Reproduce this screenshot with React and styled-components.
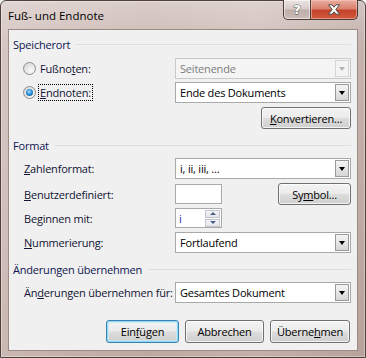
import React from 'react';
import styled, { createGlobalStyle, css } from 'styled-components';

const GlobalStyle = createGlobalStyle`
  html, body {
    margin: 0;
    padding: 0;
    background: #ffffff;
  }
  body {
    font-family: "Open Sans", "Noto Sans", sans-serif;
    font-size: 11px;
    letter-spacing: -0.2px;
    color: #111433;
  }
`;

// window frame + title bar
const Window = styled.div`
  width: 366px;
  height: 358px;
  box-sizing: border-box;
  display: flex;
  flex-direction: column;
  border: 1px solid #4f403c;
  border-radius: 6px 6px 0 0;
  background:
    linear-gradient(90deg, rgba(255,255,255,0.18) 0%, rgba(255,255,255,0) 40%, rgba(255,255,255,0.1) 70%, rgba(0,0,0,0.04) 100%),
    linear-gradient(180deg, #dacdc9 0%, #cdbab5 12%, #c6b1ab 60%, #bea8a2 100%);
  box-shadow: inset 0 0 0 1px rgba(255,255,255,0.35);
`;

const TitleBar = styled.div`
  height: 28px;
  display: flex;
  justify-content: space-between;
  align-items: flex-start;
`;

const Title = styled.span`
  padding-left: 7px;
  line-height: 29px;
  font-size: 11.5px;
  letter-spacing: 0;
  color: #000000;
`;

const CaptionButtons = styled.div`
  display: flex;
  margin-right: 7px;
  margin-top: -1px;
`;

const CaptionButton = styled.div`
  box-sizing: border-box;
  height: 20px;
  width: ${p => p.$width}px;
  display: flex;
  align-items: center;
  justify-content: center;
  border: 1px solid #4a3b37;
  border-top: none;
  ${p => p.$close ? css`
    border-radius: 0 0 5px 0;
    border-left: none;
    background: linear-gradient(180deg, #e9ad9f 0%, #d9836f 45%, #c5432b 55%, #d25a3e 100%);
    box-shadow: inset 0 0 0 1px rgba(255,210,200,0.5);
  ` : css`
    border-radius: 0 0 0 5px;
    background: linear-gradient(180deg, #ece4e2 0%, #d8ccc9 45%, #bfaea9 55%, #cbbcb8 100%);
    box-shadow: inset 0 0 0 1px rgba(255,255,255,0.55);
  `}
`;

const HelpGlyph = styled.span`
  font-family: "DejaVu Sans", sans-serif;
  font-weight: bold;
  font-size: 13px;
  line-height: 1;
  color: #ffffff;
  -webkit-text-stroke: 0.8px #4a4a4a;
  paint-order: stroke fill;
`;

// client area
const Client = styled.div`
  flex: 1;
  margin: 0 7px 6px 7px;
  box-sizing: border-box;
  border: 1px solid #9c8a85;
  background: #f0f0f0;
  display: flex;
  flex-direction: column;
`;

const GroupHeader = styled.div`
  display: flex;
  align-items: center;
  gap: 6px;
  height: 14px;
  margin-top: ${p => p.$top}px;
  padding-left: 4px;
  padding-right: 6px;
  color: #0f1550;

  &::after {
    content: '';
    flex: 1;
    height: 1px;
    background: #d5dfe5;
  }
`;

const Row = styled.div`
  display: flex;
  align-items: center;
  height: ${p => p.$height || 21}px;
  margin-top: ${p => p.$top}px;
  padding-left: 14px;
  padding-right: 6px;
  justify-content: ${p => p.$end ? 'flex-end' : 'flex-start'};
`;

const LabelCell = styled.div`
  width: 152px;
  flex: none;
  display: flex;
  align-items: center;
  gap: 3px;
  white-space: nowrap;
`;

const Label = styled.span`
  padding: 0 1px;
  ${p => p.$focus && css`
    outline: 1px dotted #000;
    outline-offset: 0;
  `}
`;

const Radio = styled.span`
  width: 13px;
  height: 13px;
  box-sizing: border-box;
  border-radius: 50%;
  border: 1px solid #8d8d8d;
  background: radial-gradient(circle at 65% 70%, #fbfbfb 0%, #e6e6e6 50%, #cfcfcf 100%);
  display: flex;
  align-items: center;
  justify-content: center;

  &::after {
    content: '';
    display: ${p => p.$checked ? 'block' : 'none'};
    width: 7px;
    height: 7px;
    border-radius: 50%;
    background: radial-gradient(circle at 45% 40%, #a9e2ff 0%, #2c8fd6 45%, #0c4678 100%);
  }
`;

const Combo = styled.div`
  box-sizing: border-box;
  width: 176px;
  height: 21px;
  display: flex;
  align-items: center;
  padding: 1px 1px 1px 4px;
  border: 1px solid ${p => p.$disabled ? '#c9c9c9' : '#a9a9a9'};
  background: ${p => p.$disabled ? '#f4f4f4' : '#ffffff'};
  color: ${p => p.$disabled ? '#7c7c7c' : '#000000'};
`;

const ComboText = styled.span`
  flex: 1;
  white-space: nowrap;
`;

const DropButton = styled.span`
  box-sizing: border-box;
  width: 14px;
  height: 17px;
  display: flex;
  align-items: center;
  justify-content: center;
  border: 1px solid ${p => p.$disabled ? '#d6d6d6' : '#9a9a9a'};
  background: ${p => p.$disabled
    ? '#f4f4f4'
    : 'linear-gradient(180deg, #f4f4f4 0%, #e6e6e6 50%, #d6d6d6 100%)'};
`;

const Arrow = styled.span`
  width: 0;
  height: 0;
  border-left: 3.5px solid transparent;
  border-right: 3.5px solid transparent;
  border-top: 4px solid ${p => p.$disabled ? '#b4b4b4' : '#000000'};
`;

const TextBox = styled.div`
  box-sizing: border-box;
  width: 47px;
  height: 20px;
  border: 1px solid #a9a9a9;
  background: #ffffff;
  display: flex;
  align-items: center;
  padding-left: 3px;
  color: #1a2bb0;
`;

const SpinText = styled.span`
  flex: 1;
`;

const SpinButtons = styled.div`
  display: flex;
  flex-direction: column;
  gap: 1px;
  margin-right: 1px;
`;

const SpinButton = styled.span`
  box-sizing: border-box;
  width: 15px;
  height: 8px;
  display: flex;
  align-items: center;
  justify-content: center;
  border: 1px solid #c1c6cf;
  background: linear-gradient(180deg, #f3f4f6 0%, #e3e5e9 100%);

  &::after {
    content: '';
    width: 0;
    height: 0;
    border-left: 3px solid transparent;
    border-right: 3px solid transparent;
    ${p => p.$up
      ? css`border-bottom: 3px solid #4a5f8c;`
      : css`border-top: 3px solid #4a5f8c;`}
  }
`;

const Button = styled.div`
  box-sizing: border-box;
  width: ${p => p.$width}px;
  height: ${p => p.$height || 22}px;
  display: flex;
  align-items: center;
  justify-content: center;
  color: #000000;
  border-radius: 3px;
  border: 1px solid ${p => p.$default ? '#3c7fb1' : '#707070'};
  background: linear-gradient(180deg, #f3f3f3 0%, #ebebeb 48%, #dddddd 52%, #cfcfcf 100%);
  box-shadow: ${p => p.$default
    ? 'inset 0 0 0 1px #8fdcf9, inset 0 0 0 2px rgba(190,235,252,0.6)'
    : 'inset 0 0 0 1px rgba(255,255,255,0.75)'};
`;

const Spacer = styled.div`
  flex: 1;
`;

const ButtonRow = styled.div`
  display: flex;
  justify-content: flex-end;
  gap: 6px;
  height: 23px;
  padding-right: 7px;
  margin-top: 17px;
`;

const CloseIcon = () => (
  <svg width="14" height="11" viewBox="0 0 14 11">
    <path
      d="M1.5 0.8 L5 0.8 L7 3.2 L9 0.8 L12.5 0.8 L8.8 5.5 L12.5 10.2 L9 10.2 L7 7.8 L5 10.2 L1.5 10.2 L5.2 5.5 Z"
      fill="#ffffff"
      stroke="#4b4b4b"
      strokeWidth="1"
      strokeLinejoin="round"
    />
  </svg>
);

const Combobox = ({ children, disabled }) => (
  <Combo $disabled={disabled}>
    <ComboText>{children}</ComboText>
    <DropButton $disabled={disabled}>
      <Arrow $disabled={disabled} />
    </DropButton>
  </Combo>
);

export default function App() {
  return (
    <>
      <GlobalStyle />
      <Window>
        <TitleBar>
          <Title>Fuß- und Endnote</Title>
          <CaptionButtons>
            <CaptionButton $width={28}>
              <HelpGlyph>?</HelpGlyph>
            </CaptionButton>
            <CaptionButton $width={47} $close>
              <CloseIcon />
            </CaptionButton>
          </CaptionButtons>
        </TitleBar>

        <Client>
          <GroupHeader $top={7}>Speicherort</GroupHeader>
          <Row $top={7}>
            <LabelCell>
              <Radio />
              <Label>Fußno<u>t</u>en:</Label>
            </LabelCell>
            <Combobox disabled>Seitenende</Combobox>
          </Row>
          <Row $top={3}>
            <LabelCell>
              <Radio $checked />
              <Label $focus><u>E</u>ndnoten:</Label>
            </LabelCell>
            <Combobox>Ende des Dokuments</Combobox>
          </Row>
          <Row $top={4} $height={22} $end>
            <Button $width={90}><span><u>K</u>onvertieren...</span></Button>
          </Row>

          <GroupHeader $top={9}>Format</GroupHeader>
          <Row $top={6}>
            <LabelCell><Label><u>Z</u>ahlenformat:</Label></LabelCell>
            <Combobox>i, ii, iii, ...</Combobox>
          </Row>
          <Row $top={4} $height={22}>
            <LabelCell><Label><u>B</u>enutzerdefiniert:</Label></LabelCell>
            <TextBox />
            <Spacer />
            <Button $width={73}><span>Sy<u>m</u>bol...</span></Button>
          </Row>
          <Row $top={3} $height={20}>
            <LabelCell><Label>Be<u>g</u>innen mit:</Label></LabelCell>
            <TextBox>
              <SpinText>i</SpinText>
              <SpinButtons>
                <SpinButton $up />
                <SpinButton />
              </SpinButtons>
            </TextBox>
          </Row>
          <Row $top={4}>
            <LabelCell><Label><u>N</u>ummerierung:</Label></LabelCell>
            <Combobox>Fortlaufend</Combobox>
          </Row>

          <GroupHeader $top={9}>Änderungen übernehmen</GroupHeader>
          <Row $top={6}>
            <LabelCell><Label>Än<u>d</u>erungen übernehmen für:</Label></LabelCell>
            <Combobox>Gesamtes Dokument</Combobox>
          </Row>

          <ButtonRow>
            <Button $width={73} $height={23} $default><span>Ein<u>f</u>ügen</span></Button>
            <Button $width={79} $height={23}>Abbrechen</Button>
            <Button $width={80} $height={23}><span>Überne<u>h</u>men</span></Button>
          </ButtonRow>
        </Client>
      </Window>
    </>
  );
}
